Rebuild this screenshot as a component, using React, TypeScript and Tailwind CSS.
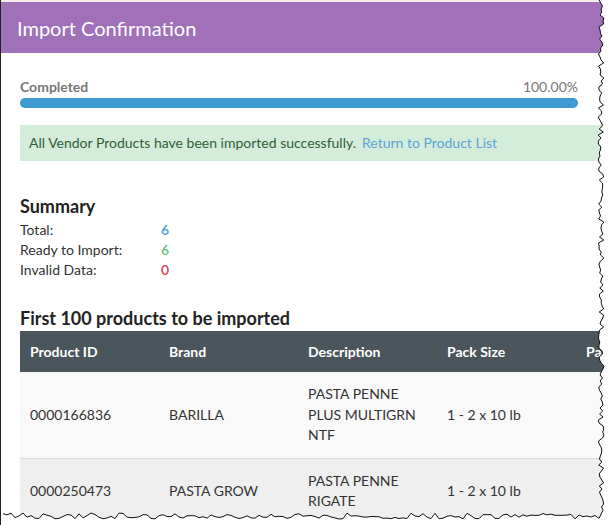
import React from "react";

// deterministic pseudo-random for the torn paper edge
const rand = (i: number) => {
  const v = Math.sin(i * 12.9898 + 78.233) * 43758.5453;
  return v - Math.floor(v);
};

function tornPath() {
  const pts: [number, number][] = [];
  // right edge, top to bottom
  for (let y = 0; y <= 510; y += 3) {
    pts.push([600 + (rand(y) - 0.5) * 6, y]);
  }
  // bottom edge, right to left
  for (let x = 598; x >= 0; x -= 4) {
    pts.push([x, 516 + (rand(x + 1000) - 0.5) * 6]);
  }
  return pts;
}

function TornEdge() {
  const pts = tornPath();
  const line = pts.map(([x, y], i) => `${i ? "L" : "M"}${x.toFixed(1)} ${y.toFixed(1)}`).join(" ");
  const fill = `M608 0 L${pts[0][0].toFixed(1)} 0 ${line.slice(1).replace(/^[^L]*/, "")} L0 525 L608 525 Z`;
  return (
    <svg className="pointer-events-none absolute left-0 top-0" width={608} height={525} viewBox="0 0 608 525">
      <path d={fill} fill="#ffffff" />
      <path d={line} fill="none" stroke="#111" strokeWidth={1} />
    </svg>
  );
}

const rows = [
  { id: "0000166836", brand: "BARILLA", desc: ["PASTA PENNE", "PLUS MULTIGRN", "NTF"], pack: "1 - 2 x 10 lb", bg: "bg-[#f9f9f9]" },
  { id: "0000250473", brand: "PASTA GROW", desc: ["PASTA PENNE", "RIGATE"], pack: "1 - 2 x 10 lb", bg: "bg-[#efefef]" },
];

export default function App() {
  return (
    <div
      className="relative h-[525px] w-[608px] overflow-hidden border-l border-[#222] bg-white text-[14px] leading-5 text-[#333]"
      style={{ fontFamily: "Lato, 'Open Sans', sans-serif" }}
    >
      <div className="h-[2px] bg-[#f2efea]" />
      {/* Header */}
      <div className="flex h-[51px] items-center bg-[#a071b9] pl-[16px]">
        <h1 className="text-[20px] text-white">Import Confirmation</h1>
      </div>

      <div className="pl-[19px]">
        {/* Progress */}
        <div className="mt-[24px] w-[558px]">
          <div className="flex justify-between text-[#777]">
            <span className="font-bold">Completed</span>
            <span>100.00%</span>
          </div>
          <div className="mt-[1px] h-[10px] rounded-full bg-[#3d9bd1]" />
        </div>

        {/* Alert */}
        <div className="mt-[17px] flex h-[36px] w-[600px] items-center bg-[#d4ecda] pl-[9px] text-[#2f5f36]">
          All Vendor Products have been imported successfully.
          <a href="#" className="ml-[6px] text-[#5aa5d8]">
            Return to Product List
          </a>
        </div>

        {/* Summary */}
        <h2 className="mt-[33px] text-[18px] font-bold leading-6 text-[#222]">Summary</h2>
        <div className="mt-[2px] grid grid-cols-[141px_1fr]">
          <span>Total:</span>
          <span className="font-semibold text-[#4b9bd6]">6</span>
          <span>Ready to Import:</span>
          <span className="font-semibold text-[#6cbf84]">6</span>
          <span>Invalid Data:</span>
          <span className="font-semibold text-[#d8405b]">0</span>
        </div>

        <h2 className="mt-[26px] text-[18px] font-bold leading-6 text-[#222]">First 100 products to be imported</h2>

        {/* Table */}
        <table className="mt-[1px] w-[834px] table-fixed border-collapse">
          <thead>
            <tr className="h-[41px] bg-[#4a555c] text-left text-white">
              {["Product ID", "Brand", "Description", "Pack Size", "Pack Price", "Unit Price"].map((h) => (
                <th key={h} className="w-[139px] px-[10px] font-bold">
                  {h}
                </th>
              ))}
            </tr>
          </thead>
          <tbody>
            {rows.map((r) => (
              <tr key={r.id} className={`${r.bg} border-b border-[#dcdcdc]`}>
                <td className="px-[10px] py-[12px] align-middle">{r.id}</td>
                <td className="px-[10px] py-[12px] align-middle">{r.brand}</td>
                <td className="px-[10px] py-[12px] align-middle leading-[20.5px]">
                  {r.desc.map((d) => (
                    <div key={d}>{d}</div>
                  ))}
                </td>
                <td className="px-[10px] py-[12px] align-middle">{r.pack}</td>
                <td className="px-[10px] py-[12px] align-middle" />
                <td className="px-[10px] py-[12px] align-middle" />
              </tr>
            ))}
          </tbody>
        </table>
      </div>

      <TornEdge />
    </div>
  );
}
